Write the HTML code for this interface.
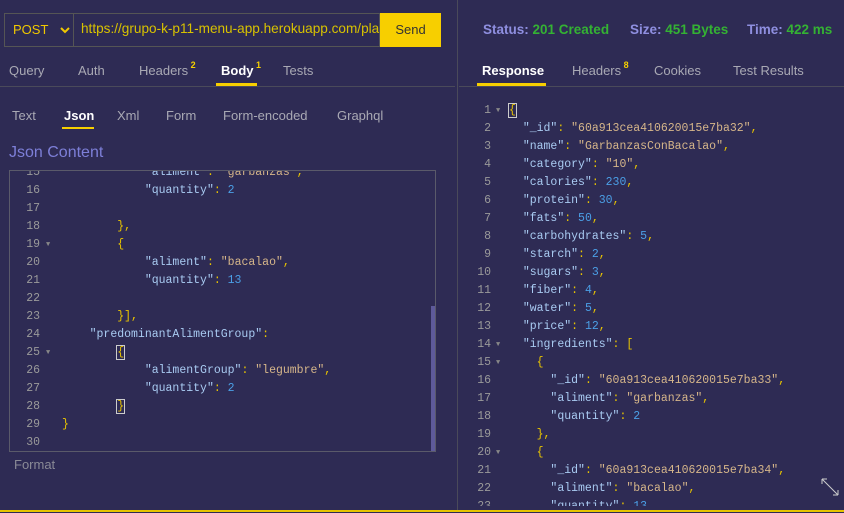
<!DOCTYPE html>
<html><head><meta charset="utf-8"><style>
*{margin:0;padding:0;box-sizing:border-box}
body{width:844px;height:513px;background:#2e2b54;font-family:"Liberation Sans",sans-serif;position:relative;overflow:hidden;color:#aaa}
.a{position:absolute;white-space:pre}
.m{font-family:"Liberation Mono",monospace;font-size:11.5px;line-height:18px;white-space:normal}
.m>div{position:relative;height:18px;white-space:pre}
.m .ln{position:absolute;left:0;color:#9a9a9a;text-align:right}
.m .ar{position:absolute;color:#888;font-size:7px}
.m .c{position:absolute}
.k{color:#a9cbf2}.s{color:#d6b68a}.n{color:#4b9fe6}.p{color:#e8c400}
.tab{font-size:13px;color:#a9a9b4}
.sup{font-size:9px;color:#f5d000;vertical-align:top;position:relative;top:-3px;font-weight:bold}
#L .ln{width:30px}#L .c{left:52px}#L .ar{left:36px}
#R .ln{width:32px}#R .c{left:50px}#R .ar{left:37px}
.hb{outline:1px solid #ccc}
</style></head><body>
<div class="a" style="left:4px;top:13px;width:70px;height:34px;border:1px solid #555"></div>
<div class="a" style="left:13px;top:22px;font-size:13px;color:#f0c800">POST</div>
<svg class="a" style="left:60px;top:26px" width="10" height="8"><path d="M1 2l4 4 4-4" stroke="#f0c800" stroke-width="2" fill="none"/></svg>
<div class="a" style="left:74px;top:13px;width:306px;height:34px;border:1px solid #555;border-left:none;overflow:hidden"><span style="position:absolute;left:7px;top:7px;font-size:13.6px;color:#d8c200">https://grupo-k-p11-menu-app.herokuapp.com/platos</span></div>
<div class="a" style="left:380px;top:13px;width:61px;height:34px;background:#f7cf00;color:#333;font-size:13px;text-align:center;line-height:34px">Send</div>
<div class="a tab" style="left:9px;top:63px">Query</div>
<div class="a tab" style="left:78px;top:63px">Auth</div>
<div class="a tab" style="left:139px;top:63px">Headers<span class="sup"> 2</span></div>
<div class="a tab" style="left:221px;top:63px;color:#fff;font-weight:bold">Body<span class="sup"> 1</span></div>
<div class="a tab" style="left:283px;top:63px">Tests</div>
<div class="a" style="left:216px;top:83px;width:41px;height:3px;background:#f7cf00"></div>
<div class="a" style="left:0;top:86px;width:455px;height:1px;background:#4a4a5a"></div>
<div class="a tab" style="left:12px;top:108px">Text</div>
<div class="a tab" style="left:64px;top:108px;color:#fff;font-weight:bold">Json</div>
<div class="a" style="left:62px;top:127px;width:32px;height:2px;background:#f7cf00"></div>
<div class="a tab" style="left:117px;top:108px">Xml</div>
<div class="a tab" style="left:166px;top:108px">Form</div>
<div class="a tab" style="left:223px;top:108px">Form-encoded</div>
<div class="a tab" style="left:337px;top:108px">Graphql</div>
<div class="a" style="left:9px;top:144px;font-size:16px;color:#7d7fd8">Json Content</div>
<div class="a" style="left:9px;top:170px;width:427px;height:282px;border:1px solid #5a5a6a;overflow:hidden">
<div class="a" style="left:421px;top:135px;width:5px;height:146px;background:#5e5a9a"></div>
<div id="L" class="a m" style="left:0;top:-7px;width:420px">
<div><span class="ln">15</span><span class="c">            <span class="k">"aliment"</span><span class="p">: </span><span class="s">"garbanzas"</span><span class="p">,</span></span></div>
<div><span class="ln">16</span><span class="c">            <span class="k">"quantity"</span><span class="p">: </span><span class="n">2</span></span></div>
<div><span class="ln">17</span></div>
<div><span class="ln">18</span><span class="c">        <span class="p">},</span></span></div>
<div><span class="ln">19</span><span class="ar">▼</span><span class="c">        <span class="p">{</span></span></div>
<div><span class="ln">20</span><span class="c">            <span class="k">"aliment"</span><span class="p">: </span><span class="s">"bacalao"</span><span class="p">,</span></span></div>
<div><span class="ln">21</span><span class="c">            <span class="k">"quantity"</span><span class="p">: </span><span class="n">13</span></span></div>
<div><span class="ln">22</span></div>
<div><span class="ln">23</span><span class="c">        <span class="p">}],</span></span></div>
<div><span class="ln">24</span><span class="c">    <span class="k">"predominantAlimentGroup"</span><span class="p">:</span></span></div>
<div><span class="ln">25</span><span class="ar">▼</span><span class="c">        <span class="p hb">{</span></span></div>
<div><span class="ln">26</span><span class="c">            <span class="k">"alimentGroup"</span><span class="p">: </span><span class="s">"legumbre"</span><span class="p">,</span></span></div>
<div><span class="ln">27</span><span class="c">            <span class="k">"quantity"</span><span class="p">: </span><span class="n">2</span></span></div>
<div><span class="ln">28</span><span class="c">        <span class="p hb">}</span></span></div>
<div><span class="ln">29</span><span class="c"><span class="p">}</span></span></div>
<div><span class="ln">30</span></div>
</div></div>
<div class="a" style="left:14px;top:457px;font-size:13px;color:#8a8a96">Format</div>
<div class="a" style="left:457px;top:0;width:1px;height:511px;background:#4a4a5a"></div>
<div class="a" style="left:483px;top:22px;font-size:13.5px;color:#8f8fe0;font-weight:bold">Status: <span style="color:#34b233">201 Created</span></div>
<div class="a" style="left:630px;top:22px;font-size:13.5px;color:#8f8fe0;font-weight:bold">Size: <span style="color:#34b233">451 Bytes</span></div>
<div class="a" style="left:747px;top:22px;font-size:13.5px;color:#8f8fe0;font-weight:bold">Time: <span style="color:#34b233">422 ms</span></div>
<div class="a tab" style="left:482px;top:63px;color:#fff;font-weight:bold">Response</div>
<div class="a" style="left:477px;top:83px;width:69px;height:3px;background:#f7cf00"></div>
<div class="a tab" style="left:572px;top:63px">Headers<span class="sup"> 8</span></div>
<div class="a tab" style="left:654px;top:63px">Cookies</div>
<div class="a tab" style="left:733px;top:63px">Test Results</div>
<div class="a" style="left:459px;top:86px;width:385px;height:1px;background:#4a4a5a"></div>
<div class="a" style="left:459px;top:102px;width:385px;height:404px;overflow:hidden">
<div id="R" class="a m" style="left:0;top:0;width:385px">
<div><span class="ln">1</span><span class="ar">▼</span><span class="c"><span class="p hb">{</span></span></div>
<div><span class="ln">2</span><span class="c">  <span class="k">"_id"</span><span class="p">: </span><span class="s">"60a913cea410620015e7ba32"</span><span class="p">,</span></span></div>
<div><span class="ln">3</span><span class="c">  <span class="k">"name"</span><span class="p">: </span><span class="s">"GarbanzasConBacalao"</span><span class="p">,</span></span></div>
<div><span class="ln">4</span><span class="c">  <span class="k">"category"</span><span class="p">: </span><span class="s">"10"</span><span class="p">,</span></span></div>
<div><span class="ln">5</span><span class="c">  <span class="k">"calories"</span><span class="p">: </span><span class="n">230</span><span class="p">,</span></span></div>
<div><span class="ln">6</span><span class="c">  <span class="k">"protein"</span><span class="p">: </span><span class="n">30</span><span class="p">,</span></span></div>
<div><span class="ln">7</span><span class="c">  <span class="k">"fats"</span><span class="p">: </span><span class="n">50</span><span class="p">,</span></span></div>
<div><span class="ln">8</span><span class="c">  <span class="k">"carbohydrates"</span><span class="p">: </span><span class="n">5</span><span class="p">,</span></span></div>
<div><span class="ln">9</span><span class="c">  <span class="k">"starch"</span><span class="p">: </span><span class="n">2</span><span class="p">,</span></span></div>
<div><span class="ln">10</span><span class="c">  <span class="k">"sugars"</span><span class="p">: </span><span class="n">3</span><span class="p">,</span></span></div>
<div><span class="ln">11</span><span class="c">  <span class="k">"fiber"</span><span class="p">: </span><span class="n">4</span><span class="p">,</span></span></div>
<div><span class="ln">12</span><span class="c">  <span class="k">"water"</span><span class="p">: </span><span class="n">5</span><span class="p">,</span></span></div>
<div><span class="ln">13</span><span class="c">  <span class="k">"price"</span><span class="p">: </span><span class="n">12</span><span class="p">,</span></span></div>
<div><span class="ln">14</span><span class="ar">▼</span><span class="c">  <span class="k">"ingredients"</span><span class="p">: [</span></span></div>
<div><span class="ln">15</span><span class="ar">▼</span><span class="c">    <span class="p">{</span></span></div>
<div><span class="ln">16</span><span class="c">      <span class="k">"_id"</span><span class="p">: </span><span class="s">"60a913cea410620015e7ba33"</span><span class="p">,</span></span></div>
<div><span class="ln">17</span><span class="c">      <span class="k">"aliment"</span><span class="p">: </span><span class="s">"garbanzas"</span><span class="p">,</span></span></div>
<div><span class="ln">18</span><span class="c">      <span class="k">"quantity"</span><span class="p">: </span><span class="n">2</span></span></div>
<div><span class="ln">19</span><span class="c">    <span class="p">},</span></span></div>
<div><span class="ln">20</span><span class="ar">▼</span><span class="c">    <span class="p">{</span></span></div>
<div><span class="ln">21</span><span class="c">      <span class="k">"_id"</span><span class="p">: </span><span class="s">"60a913cea410620015e7ba34"</span><span class="p">,</span></span></div>
<div><span class="ln">22</span><span class="c">      <span class="k">"aliment"</span><span class="p">: </span><span class="s">"bacalao"</span><span class="p">,</span></span></div>
<div><span class="ln">23</span><span class="c">      <span class="k">"quantity"</span><span class="p">: </span><span class="n">13</span></span></div>
</div></div>
<svg class="a" style="left:821px;top:478px" width="19" height="19"><path d="M1 1l16 16M1 1h5M1 1v5M17 17h-5M17 17v-5" stroke="#ccc" stroke-width="1" fill="none"/></svg>
<div class="a" style="left:0;top:510px;width:844px;height:2px;background:#e6c400"></div>
</body></html>
